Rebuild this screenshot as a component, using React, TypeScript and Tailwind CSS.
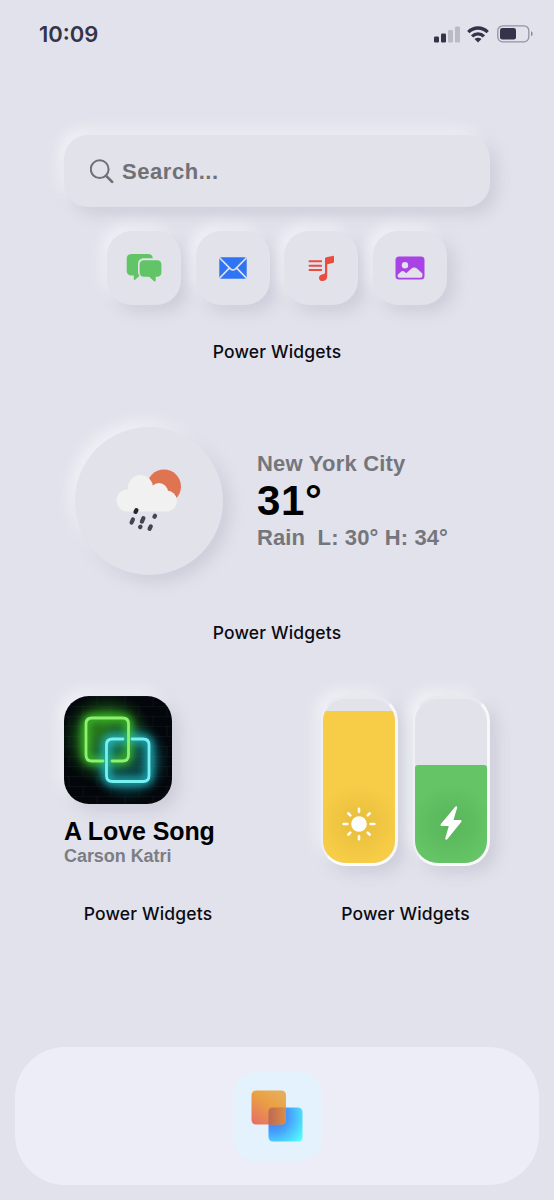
import type { ReactNode } from "react";

const ROUNDED = "font-['Liberation_Sans',sans-serif] font-bold";
const RAISED =
  "bg-[#e1e2ea] shadow-[7px_7px_15px_rgba(170,170,190,0.38),-6px_-6px_14px_rgba(244,246,249,0.8)]";

function StatusBar() {
  return (
    <header className="flex h-[68px] items-center justify-between pr-5 pl-[39px]">
      <span className="text-[22px] leading-[22px] font-semibold text-[#353349]">10:09</span>
      <div className="flex items-center">
        <svg width="26" height="17" viewBox="0 0 26 17" fill="#353349">
          <rect x="0" y="10.5" width="5" height="6" rx="1.3" />
          <rect x="7" y="7.5" width="5" height="9" rx="1.3" />
          <rect x="14" y="4" width="5" height="12.5" rx="1.3" opacity=".22" />
          <rect x="21" y="0.5" width="5" height="16" rx="1.3" opacity=".22" />
        </svg>
        <svg className="ml-[7px]" width="22" height="17" viewBox="0 0 22 17" fill="none" stroke="#353349" strokeWidth="3.3">
          <path d="M1.3 6.1C6.8.6 15.2.6 20.7 6.1" />
          <path d="M5.1 10.3c3.3-3.3 8.5-3.3 11.8 0" />
          <path d="M7.5 13.1c2-1.8 5-1.8 7 0L11 16.6Z" fill="#353349" stroke="none" />
        </svg>
        <svg className="ml-2" width="37" height="18" viewBox="0 0 37 18">
          <rect x=".8" y=".8" width="31" height="16" rx="4.8" fill="none" stroke="#353349" strokeOpacity=".45" strokeWidth="1.3" />
          <rect x="3" y="3" width="16" height="11.5" rx="2.3" fill="#353349" />
          <path d="M34 6.3c2.2 1 2.2 4 0 5Z" fill="#353349" opacity=".5" />
        </svg>
      </div>
    </header>
  );
}

function WidgetLabel() {
  return (
    <p className="text-center text-[17.5px] leading-6 font-[450] tracking-[0.15px] whitespace-nowrap text-[#0b0b12]">
      Power Widgets
    </p>
  );
}

function Tile({ children }: { children: ReactNode }) {
  return (
    <div className={`flex h-[74px] w-[74px] items-center justify-center rounded-[25px] ${RAISED}`}>
      {children}
    </div>
  );
}

function MessagesIcon() {
  return (
    <svg width="36" height="30" viewBox="0 0 36 30" fill="#61c466">
      <path d="M5.5 1h16.7c2.8 0 4.4 1.5 4.6 4.2H18c-3.8 0-6 2.2-6 6v7.2c0 1.8.5 3.3 1.5 4.3l-4.1 3.9c-.7.6-1.6.3-1.6-.7v-3.4H5.9c-3.4 0-5.2-1.8-5.2-5.1V6C.7 2.7 2.4 1 5.5 1Z" />
      <path d="M18 7.2h13c2.9 0 4.4 1.6 4.4 4.4v7.7c0 2.9-1.5 4.5-4.4 4.5h-1.3v3.7c0 1-.9 1.3-1.6.7l-5-4.4H18c-2.8 0-4.4-1.6-4.4-4.5v-7.7c0-2.8 1.6-4.4 4.4-4.4Z" />
    </svg>
  );
}

function MailIcon() {
  return (
    <svg width="28" height="22" viewBox="0 0 28 22">
      <rect x=".3" y=".3" width="27.4" height="21.4" rx="1.8" fill="#2f75f3" />
      <path d="m.7 1 10.8 10.8c1.8 1.7 3.2 1.7 5 0L27.3 1M.7 21l9.6-9.9M27.3 21l-9.6-9.9" fill="none" stroke="#e1e2ea" strokeWidth="1.7" />
    </svg>
  );
}

function MusicIcon() {
  return (
    <svg width="27" height="27" viewBox="0 0 27 27" fill="#ec4b40">
      <path d="M1.5 6.3h11.7M1.5 10.7h11.7M1.5 15h11.7" stroke="#ec4b40" strokeWidth="1.9" strokeLinecap="round" />
      <path d="M17 4c0-1 .5-1.500 1.400-1.700l6.100-1.400c.9-.2 1.500.2 1.500 1.100v4.500c0 .8-.4 1.200-1.200 1.400l-5.600 1.300v12c0 3-2 4.900-4.800 4.900-2 0-3.400-1.300-3.400-3.200 0-2 1.500-3.200 3.700-3.600 1.600-.3 2.300-.7 2.300-2Z" />
    </svg>
  );
}

function PhotoIcon() {
  return (
    <svg width="30" height="24" viewBox="0 0 30 24">
      <rect x=".5" y=".5" width="29" height="23" rx="3.5" fill="#aa43e5" />
      <circle cx="10" cy="9.2" r="3.2" fill="#e1e2ea" />
      <path d="M2.6 19.8v-.9l3.6-3.3c1-.9 2-.9 3 0l2 1.700 5-4.500c2-1.900 4-1.900 6 0l5.200 4.700v2.300c0 1.300-.6 2-2 2H4.600c-1.400 0-2-.7-2-2Z" fill="#e1e2ea" />
    </svg>
  );
}

function SearchWidget() {
  return (
    <section className="mt-[67px]">
      <div className={`mx-16 flex h-[72px] w-[426px] items-center rounded-[24px] pl-[26px] ${RAISED}`}>
        <svg width="24" height="25" viewBox="0 0 24 25" fill="none" stroke="#6f7077" strokeLinecap="round">
          <circle cx="9.7" cy="10.2" r="8.9" strokeWidth="2" />
          <path d="m16.2 16.9 5.9 6" strokeWidth="2.7" />
        </svg>
        <span className={`ml-2 pt-px text-[22px] leading-7 tracking-[0.55px] text-[#707177] ${ROUNDED}`}>Search...</span>
      </div>
      <div className="mt-6 flex justify-center gap-[14.7px]">
        <Tile><MessagesIcon /></Tile>
        <Tile><MailIcon /></Tile>
        <Tile><MusicIcon /></Tile>
        <Tile><PhotoIcon /></Tile>
      </div>
      <div className="mt-[35px]">
        <WidgetLabel />
      </div>
    </section>
  );
}

function RainCloud() {
  return (
    <svg width="72" height="68" viewBox="0 0 72 68">
      <circle cx="50" cy="18.5" r="17" fill="#df7453" />
      <g fill="#f1f1f2">
        <circle cx="13.5" cy="32.5" r="11" />
        <circle cx="26.5" cy="19.5" r="12.5" />
        <circle cx="45" cy="24" r="9" />
        <circle cx="52.5" cy="33" r="10.5" />
        <path d="M13.5 23h34l5 20.500h-39Z" />
      </g>
      <g stroke="#45454f" strokeWidth="4.2" strokeLinecap="round">
        <path d="m22.4 42.1-.8 1.8" stroke="#25252a" />
        <path d="m18.9 51.5-1.3 3M29.4 50.2l-1.500 3.400M41 47.800l-.6 1M26.500 58.600l-.4.500M36.800 58.400l-1.200 2.400" />
      </g>
    </svg>
  );
}

function WeatherWidget() {
  return (
    <section className="mt-[63px]">
      <div className="flex items-center pl-[75px]">
        <div className={`flex h-[148px] w-[148px] items-center justify-center rounded-full pt-px pl-px ${RAISED}`}>
          <RainCloud />
        </div>
        <div className={`ml-[34px] ${ROUNDED} text-[22px] leading-7 text-[#75767c]`}>
          <p className="tracking-[0.2px]">New York City</p>
          <p className="h-[46px] text-[42px] leading-[46px] tracking-[0.7px] text-black">31°</p>
          <p className="tracking-[0.12px] whitespace-pre">Rain  L: 30° H: 34°</p>
        </div>
      </div>
      <div className="mt-[46px]">
        <WidgetLabel />
      </div>
    </section>
  );
}

const GREEN_FRAME = "M39 65H28q-6 0-6-6V28q0-6 6-6h30.500q6 0 6 6v31q0 6-6 6H48";
const CYAN_FRAME = "M59 43H48.500q-6 0-6 6v30.500q0 6 6 6H79q6 0 6-6V49q0-6-6-6H68";

function AlbumArt() {
  return (
    <svg className="block" width="108" height="108" viewBox="0 0 108 108">
      <defs>
        <radialGradient id="greenHaze">
          <stop offset="0" stopColor="#2f8a1e" />
          <stop offset=".5" stopColor="#257d1c" stopOpacity=".8" />
          <stop offset="1" stopColor="#0b2f10" stopOpacity="0" />
        </radialGradient>
        <radialGradient id="cyanHaze">
          <stop offset="0" stopColor="#0d4f4b" stopOpacity=".7" />
          <stop offset=".6" stopColor="#117077" stopOpacity=".6" />
          <stop offset="1" stopColor="#062b35" stopOpacity="0" />
        </radialGradient>
        <filter id="neonGlow" x="-50%" y="-50%" width="200%" height="200%">
          <feGaussianBlur stdDeviation="4.5" />
        </filter>
        <pattern id="bricks" width="28" height="20" patternUnits="userSpaceOnUse">
          <path d="M0 .5h28M0 10.5h28M5 0v10M19 10v10" fill="none" stroke="#52666b" strokeOpacity=".1" />
        </pattern>
      </defs>
      <rect width="108" height="108" fill="#03070b" />
      <circle cx="43" cy="43" r="48" fill="url(#greenHaze)" />
      <circle cx="64" cy="64" r="43" fill="url(#cyanHaze)" />
      <rect width="108" height="108" fill="url(#bricks)" />
      <g fill="none" strokeLinecap="round">
        <path d={GREEN_FRAME} stroke="#45d52b" strokeWidth="6" filter="url(#neonGlow)" />
        <path d={CYAN_FRAME} stroke="#20c8d4" strokeWidth="6" filter="url(#neonGlow)" />
        <path d={GREEN_FRAME} stroke="#8eef70" strokeWidth="2.8" />
        <path d={CYAN_FRAME} stroke="#78eff1" strokeWidth="2.8" />
      </g>
    </svg>
  );
}

function MusicWidget() {
  return (
    <div className="w-[168px]">
      <div className={`h-[108px] w-[108px] overflow-hidden rounded-[25px] ${RAISED}`}>
        <AlbumArt />
      </div>
      <p className={`mt-3 text-[25px] leading-[30px] tracking-[-0.1px] whitespace-nowrap text-black ${ROUNDED}`}>A Love Song</p>
      <p className={`text-[18px] leading-5 tracking-[-0.05px] whitespace-nowrap text-[#7c7d84] ${ROUNDED}`}>Carson Katri</p>
    </div>
  );
}

function Gauge({ fill, height, children }: { fill: string; height: number; children: ReactNode }) {
  return (
    <div className={`flex h-[170px] w-[77px] items-end overflow-hidden rounded-[25px] border-[3px] border-l-2 border-t-[#e8e8ed] border-r-[#f8f8f9] border-b-[#fcfcfc] border-l-[#f0f0f3] ${RAISED}`}>
      <div className={`flex w-full items-end justify-center rounded-t-[3px] ${fill}`} style={{ height }}>
        {children}
      </div>
    </div>
  );
}

function GaugesWidget() {
  return (
    <div className="flex gap-[15px]">
      <Gauge fill="bg-[radial-gradient(circle_at_50%_74%,#e8bd3c_0,#f7cc46_40px)]" height={152}>
        <svg className="mb-[21px]" width="36" height="36" viewBox="0 0 36 36" stroke="white" strokeWidth="2.6" strokeLinecap="round">
          <circle cx="18" cy="18" r="7.8" fill="white" stroke="none" />
          <path d="M18 2.7v3M18 30.3v3M2.7 18h3.6M29.7 18h3.6M7.3 7.3l2 2M26.7 26.7l2 2M28.7 7.3l-2 2M9.3 26.7l-2 2" />
        </svg>
      </Gauge>
      <Gauge fill="bg-[radial-gradient(circle_at_50%_60%,#58b55a_0,#65c466_40px)]" height={98}>
        <svg className="mb-[22px]" width="24" height="36" viewBox="0 0 24 36" fill="white">
          <path d="M15.8 2.2 1.9 19.1c-.8 1-.4 2 .8 2h7.1L6.4 32.7c-.6 2.1 1 2.7 2.3 1.1l13.5-16.9c.8-1 .4-2-.8-2h-6.900l3.500-11.700c.6-2-1-2.500-2.200-1Z" />
        </svg>
      </Gauge>
    </div>
  );
}

function Dock() {
  return (
    <nav className="mx-[15px] mt-[121px] flex h-[138px] items-center justify-center rounded-[50px] bg-[#ecedf6]">
      <div className="flex h-[89px] w-[89px] items-center justify-center rounded-[23px] bg-[#e4f2fe]">
        <svg width="53" height="53" viewBox="0 0 53 53">
          <defs>
            <radialGradient id="blueSquare" cx="12%" cy="24%" r="110%">
              <stop offset="0" stopColor="#4a78fa" />
              <stop offset=".4" stopColor="#4598fa" />
              <stop offset="1" stopColor="#53ffff" />
            </radialGradient>
            <linearGradient id="orangeSquare" x1="0" y1="1" x2=".7" y2="0">
              <stop stopColor="#e46c68" />
              <stop offset=".65" stopColor="#eba043" />
              <stop offset="1" stopColor="#e8ac58" />
            </linearGradient>
            <linearGradient id="overlap" x2="1" y2="0">
              <stop stopColor="#bd6855" />
              <stop offset="1" stopColor="#d98e45" />
            </linearGradient>
          </defs>
          <rect x="17.500" y="17.500" width="34" height="34" rx="4.5" fill="url(#blueSquare)" />
          <rect x=".5" y=".5" width="34.5" height="34" rx="4.5" fill="url(#orangeSquare)" />
          <path d="M22 17.5h13V30q0 4.500-4.500 4.500h-13V22q0-4.500 4.500-4.500Z" fill="url(#overlap)" />
        </svg>
      </div>
    </nav>
  );
}

export default function App() {
  return (
    <main className="h-[1200px] w-[554px] overflow-hidden bg-[#e1e2eb] font-['Inter',sans-serif]">
      <StatusBar />
      <SearchWidget />
      <WeatherWidget />
      <section className="mt-[51px] flex justify-between px-16">
        <div>
          <MusicWidget />
          <div className="mt-9">
            <WidgetLabel />
          </div>
        </div>
        <div>
          <GaugesWidget />
          <div className="mt-9">
            <WidgetLabel />
          </div>
        </div>
      </section>
      <Dock />
    </main>
  );
}
